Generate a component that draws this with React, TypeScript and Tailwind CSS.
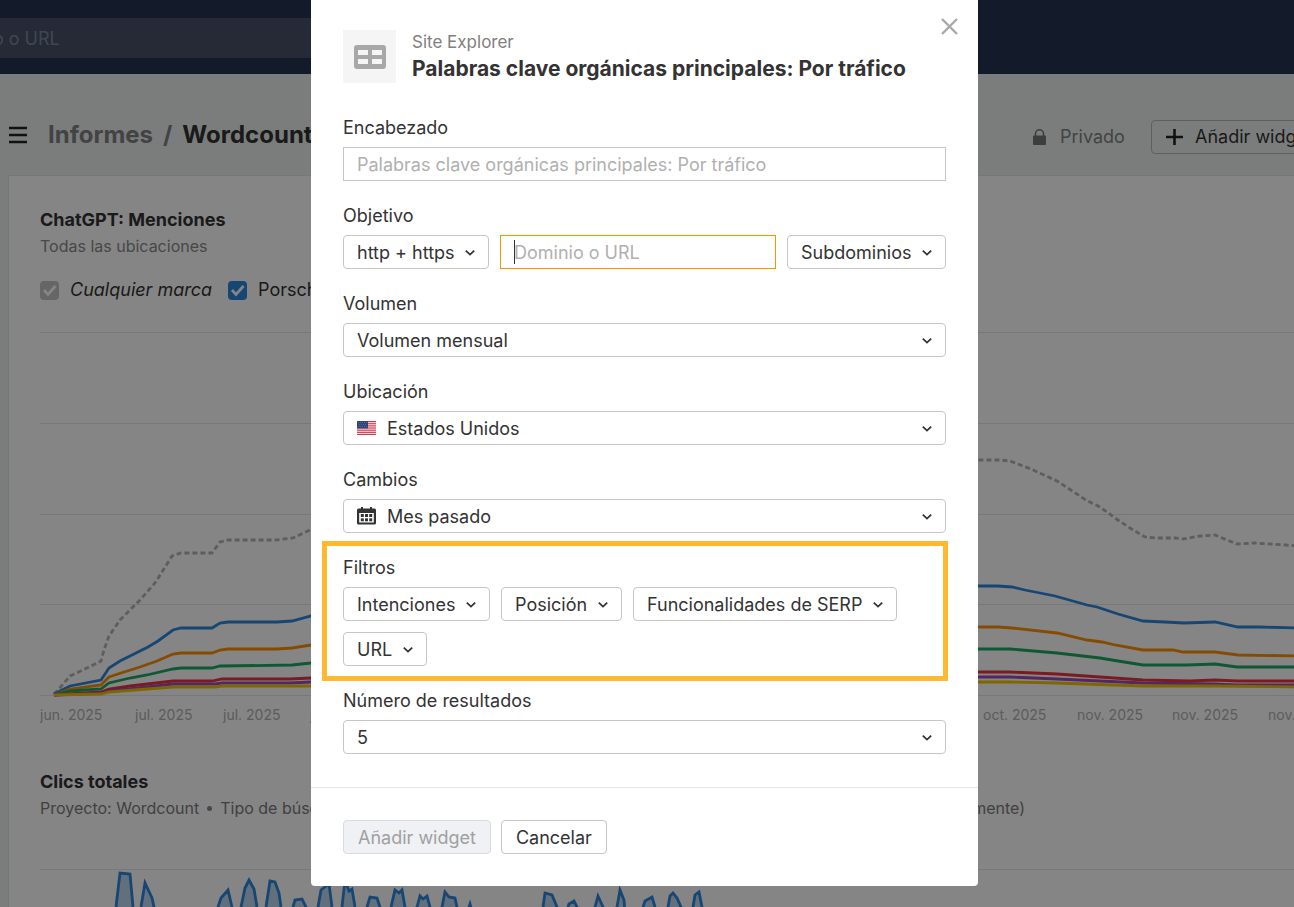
import { useId, type ReactNode } from 'react'

interface Series {
  name: string
  color: string
  dashed?: boolean
  points: string
}

const mentions: Series[] = [
  {
    name: 'any',
    color: '#b4b4b4',
    dashed: true,
    points:
      '54,694 58,690 70,676 85,669 101,661 104,650 109,636 120,620 140,600 155,583 172,556 181,553 212,553 220,542 228,540 276,540 293,538 310,530 420,500 640,470 860,462 980,460 1000,460 1010,461 1031,469 1057,481 1086,500 1100,507 1115,518 1130,528 1145,537 1155,538 1175,538 1183,539 1200,536 1215,535 1237,544 1255,543 1300,546',
  },
  {
    name: 'blue',
    color: '#2c86dd',
    points:
      '54,694 70,686 101,680 109,668 120,661 130,656 148,647 158,641 173,630 181,628 212,628 220,623 228,622 277,622 292,621 311,616 640,590 978,586 998,586 1012,587 1025,590 1055,596 1087,605 1097,607 1118,614 1143,621 1165,622 1184,623 1215,622 1238,627 1260,627 1300,628',
  },
  {
    name: 'orange',
    color: '#ff9100',
    points:
      '54,695 70,689 101,685 109,677 121,673 140,667 157,661 173,654 181,653 212,653 220,650 228,649 277,649 292,648 311,645 640,630 978,627 998,627 1012,628 1048,632 1057,633 1087,640 1102,642 1115,645 1143,650 1173,650 1183,652 1215,652 1238,655 1300,656',
  },
  {
    name: 'green',
    color: '#1fa862',
    points:
      '54,695 70,691 101,689 109,683 130,678 147,675 173,669 181,668 212,668 220,666 292,665 311,663 640,652 978,649 1010,649 1057,653 1100,658 1118,661 1143,665 1187,665 1215,664 1237,667 1300,667',
  },
  {
    name: 'red',
    color: '#ea3340',
    points:
      '54,695 101,692 109,689 130,686 173,681 212,681 222,679 290,679 311,678 640,673 978,672 1010,672 1057,674 1143,680 1190,681 1215,680 1237,681 1300,681',
  },
  {
    name: 'purple',
    color: '#a04cb8',
    points:
      '54,695 101,693 109,691 147,687 173,684 215,684 222,683 290,683 311,682 640,678 978,677 1010,677 1057,679 1143,683 1215,684 1237,685 1300,685',
  },
  {
    name: 'yellow',
    color: '#f2c300',
    points:
      '54,695 101,694 109,692 173,687 215,687 222,686 290,686 311,686 640,683 978,682 1010,682 1057,683 1143,686 1215,686 1300,687',
  },
]

const months = [
  { x: 40, label: 'jun. 2025' },
  { x: 135, label: 'jul. 2025' },
  { x: 223, label: 'jul. 2025' },
  { x: 310, label: 'jul. 2025' },
  { x: 983, label: 'oct. 2025' },
  { x: 1077, label: 'nov. 2025' },
  { x: 1172, label: 'nov. 2025' },
  { x: 1268, label: 'nov. 2025' },
]

const gridLines = [332, 423, 514, 604, 695]

const clicks =
  '40,925 112,925 116,907 120,873 130,874 133,907 137,925 141,907 145,883 152,898 154,907 160,925 212,925 218,907 221,898 228,890 232,907 236,925 241,907 245,888 249,880 254,889 257,907 261,925 266,907 270,881 275,882 279,893 281,907 286,925 293,907 295,900 302,899 306,907 312,925 318,907 321,890 329,884 332,907 337,925 342,907 345,880 349,891 352,889 355,907 360,925 367,907 370,897 377,898 380,907 386,925 391,907 395,890 399,893 402,890 405,907 411,925 417,907 420,896 423,899 427,896 430,907 436,925 442,907 445,892 449,897 455,898 457,907 463,925 470,904 476,925 538,925 543,907 545,893 552,895 557,907 562,925 569,904 574,901 577,907 582,925 595,907 598,896 603,907 608,925 617,907 620,890 624,900 626,925 640,925 643,907 645,901 652,897 655,907 661,925 668,907 670,896 673,893 677,898 681,907 686,925 693,907 695,895 699,892 702,907 708,925 1300,925'

function Chevron() {
  return (
    <svg
      className="pointer-events-none absolute right-3.5 top-1/2 -translate-y-1/2"
      width="10"
      height="8"
      viewBox="0 0 10 8"
      fill="none"
      stroke="#333"
      strokeWidth="1.8"
      aria-hidden="true"
    >
      <path d="M0.8 2.600 L5 6.600 L9.2 2.600" />
    </svg>
  )
}

interface DropdownProps {
  id?: string
  value: string
  label?: string
  icon?: ReactNode
  block?: boolean
}

function Dropdown({ id, value, label, icon, block }: DropdownProps) {
  return (
    <div className={block ? 'relative w-full' : 'relative'}>
      {icon && <span className="pointer-events-none absolute left-3.5 top-1/2 -translate-y-1/2">{icon}</span>}
      <select
        id={id}
        aria-label={label}
        className={`h-[34px] appearance-none rounded-[4px] border border-[#c6c6c6] bg-white pr-[33px] text-[18px] text-[#333] ${
          icon ? 'pl-[43px]' : 'pl-[13px]'
        } ${block ? 'w-full' : ''}`}
      >
        <option>{value}</option>
      </select>
      <Chevron />
    </div>
  )
}

function Field({ label, children }: { label: string; children: (id: string) => ReactNode }) {
  const id = useId()
  return (
    <div className="flex flex-col gap-1.5">
      <label htmlFor={id} className="text-[18px] leading-[26px]">
        {label}
      </label>
      {children(id)}
    </div>
  )
}

function FlagUs() {
  return (
    <svg className="block" width="19" height="14" viewBox="0 0 19 14" aria-hidden="true">
      <rect width="19" height="14" fill="#f8dfe2" />
      {[0, 2, 4, 6, 8, 10, 12].map((y) => (
        <rect key={y} y={y * 1.08} width="19" height="1.1" fill="#d13a4b" />
      ))}
      <rect width="11" height="7.4" fill="#2f4579" />
      <path
        d="M1 1.5h9M2 3.5h8M1 5.5h9"
        stroke="#6b7aa5"
        strokeWidth="0.8"
        strokeDasharray="0.8 1.2"
      />
    </svg>
  )
}

function CalendarIcon() {
  return (
    <svg className="block" width="19" height="18" viewBox="0 0 19 18" aria-hidden="true">
      <path
        fill="#333"
        fillRule="evenodd"
        d="M4 0h2v1.500h7V0h2v1.500h2.500a1.500 1.500 0 0 1 1.500 1.500v13a1.500 1.500 0 0 1-1.500 1.500h-16A1.500 1.500 0 0 1 0 16V3a1.500 1.500 0 0 1 1.500-1.500H4zM2.200 6v9.500h14.600V6z"
      />
      {[7, 11.3].map((y) =>
        [3.8, 8, 12.2].map((x) => <rect key={`${x}-${y}`} x={x} y={y} width="3" height="3" fill="#333" />),
      )}
    </svg>
  )
}

function Check({ color, label, italic }: { color: 'gray' | 'blue'; label: string; italic?: boolean }) {
  return (
    <label className="flex items-center gap-[11px]">
      <span className="relative size-[19px]">
        <input
          type="checkbox"
          defaultChecked
          className={`block size-[19px] appearance-none rounded-[4px] ${
            color === 'gray' ? 'bg-[#c4c4c4]' : 'bg-[#2c86dd]'
          }`}
        />
        <svg
          className="pointer-events-none absolute inset-0"
          width="19"
          height="19"
          viewBox="0 0 19 19"
          fill="none"
          stroke="#fff"
          strokeWidth="2.8"
          aria-hidden="true"
        >
          <path d="M4 9l4 4.500 7.500-8.500" />
        </svg>
      </span>
      <span className={italic ? 'italic' : ''}>{label}</span>
    </label>
  )
}

function MentionsChart() {
  return (
    <svg className="mt-[23px] block" width="1300" height="400" viewBox="40 325 1300 400" role="img" aria-label="ChatGPT: Menciones">
      {gridLines.map((y) => (
        <path key={y} d={`M40 ${y}.5H1340`} stroke="#e6e6e6" />
      ))}
      {mentions.map((s) => (
        <polyline
          key={s.name}
          points={s.points}
          fill="none"
          stroke={s.color}
          strokeWidth="2.8"
          strokeDasharray={s.dashed ? '5 3' : undefined}
        />
      ))}
      {months.map((m) => (
        <text key={m.x} x={m.x} y="720" fontSize="14" fill="#b0b0b0">
          {m.label}
        </text>
      ))}
    </svg>
  )
}

function ReportPage() {
  return (
    <div className="min-w-[1400px] text-[#333]">
      <header className="h-[74px] bg-[#253252] pt-[18px]">
        <input
          type="text"
          aria-label="Buscar"
          placeholder="Dominio o URL"
          className="-ml-20 h-10 w-[900px] bg-[#475269] px-3.5 text-[18px] placeholder:text-[#7e879b]"
        />
      </header>

      <div className="flex h-[101px] items-center pl-2 pt-6">
        <div className="flex items-center pb-1">
          <button type="button" aria-label="Menú">
            <svg className="block" width="20" height="18" viewBox="0 0 20 18" stroke="#222" strokeWidth="2.400" aria-hidden="true">
              <path d="M1 2h18M1 9h18M1 16h18" />
            </svg>
          </button>
          <nav className="ml-5 flex gap-2.5 text-[24px] font-bold">
            <a href="#informes" className="text-[#808080]">
              Informes
            </a>
            <span className="text-[#808080]">/</span>
            <span>Wordcount</span>
          </nav>
        </div>
        <div className="ml-auto flex w-[367px] items-center">
          <svg width="13" height="16" viewBox="0 0 13 16" aria-hidden="true">
            <rect y="6.500" width="13" height="9.500" rx="1" fill="#757575" />
            <path d="M2.500 7V4.800a4 4 0 0 1 8 0V7" fill="none" stroke="#757575" strokeWidth="1.600" />
          </svg>
          <span className="ml-3.5 text-[18px] text-[#808080]">Privado</span>
          <button
            type="button"
            className="ml-auto flex h-[34px] w-[249px] items-center gap-3 rounded-[4px] border border-[#b4b8b6] px-3.5 text-[18px]"
          >
            <svg width="17" height="16" viewBox="0 0 17 16" stroke="#222" strokeWidth="2.600" aria-hidden="true">
              <path d="M8.500 0v16M0 8h17" />
            </svg>
            Añadir widget
          </button>
        </div>
      </div>

      <main className="ml-2 border border-[#e0e4e2] bg-white pb-20 pl-[31px] pt-8">
        <section>
          <h2 className="text-[18px] font-bold leading-6">ChatGPT: Menciones</h2>
          <p className="mt-0.5 text-[16px] leading-6 text-[#8a8a8a]">Todas las ubicaciones</p>
          <div className="mt-5 flex items-center gap-4 text-[18px] leading-6">
            <Check color="gray" label="Cualquier marca" italic />
            <Check color="blue" label="Porsche" />
          </div>
          <MentionsChart />
        </section>

        <section className="mt-[45px]">
          <h2 className="text-[18px] font-bold leading-6">Clics totales</h2>
          <div className="mt-0.5 flex w-[985px] justify-between text-[16px] leading-6 text-[#7d7d7d]">
            <p className="flex items-center gap-2">
              Proyecto: Wordcount
              <span className="size-[5px] rounded-full bg-[#8a8a8a]" />
              Tipo de búsqueda: Web
            </p>
            <p>(agrupado mensualmente)</p>
          </div>
          <svg className="mt-10 block" width="1300" height="66" viewBox="40 860 1300 66" role="img" aria-label="Clics totales">
            <path d="M40 869.500H1340" stroke="#e6e6e6" />
            <polygon points={clicks} fill="#bcd5ef" />
            <polyline points={clicks} fill="none" stroke="#2c86dd" strokeWidth="2.800" />
          </svg>
        </section>
      </main>
    </div>
  )
}

function WidgetDialog() {
  return (
    <form role="dialog" aria-labelledby="dialog-title" className="relative w-[667px] rounded-b-[4px] bg-white text-[#333]">
      <button type="button" aria-label="Cerrar" className="absolute right-3.5 top-3 p-1.5">
        <svg className="block" width="17" height="17" viewBox="0 0 17 17" stroke="#a8a8a8" strokeWidth="2.400" aria-hidden="true">
          <path d="M1 1l15 15M16 1L1 16" />
        </svg>
      </button>

      <div className="flex flex-col gap-[22px] px-8 pb-[33px] pt-[30px]">
        <div className="mb-2.5 flex gap-4">
          <div className="flex size-[53px] items-center justify-center bg-[#f5f5f5]">
            <svg width="32" height="24" viewBox="0 0 32 24" aria-hidden="true">
              <rect width="32" height="24" rx="3" fill="#a8a8a8" />
              <path d="M4 5h10v5H4zM18 5h10v5H18zM4 14h10v5H4zM18 14h10v5H18z" fill="#f5f5f5" />
            </svg>
          </div>
          <div>
            <p className="text-[17px] leading-6 text-[#808080]">Site Explorer</p>
            <h1 id="dialog-title" className="text-[21px] font-bold leading-[29px]">
              Palabras clave orgánicas principales: Por tráfico
            </h1>
          </div>
        </div>

        <Field label="Encabezado">
          {(id) => (
            <input
              id={id}
              type="text"
              placeholder="Palabras clave orgánicas principales: Por tráfico"
              className="h-[34px] border border-[#c6c6c6] px-[13px] text-[18px] placeholder:text-[#b0b0b0]"
            />
          )}
        </Field>

        <Field label="Objetivo">
          {(id) => (
            <div className="flex gap-[11px]">
              <Dropdown value="http + https" label="Protocolo" />
              <div className="relative min-w-0 flex-1">
                <input
                  id={id}
                  type="text"
                  placeholder="Dominio o URL"
                  className="h-[34px] w-full border border-[#ff9100] px-[13px] text-[18px] outline-none placeholder:text-[#b0b0b0]"
                />
                {/* caret */}
                <span className="pointer-events-none absolute left-3.5 top-[5px] h-6 w-px bg-[#333]" />
              </div>
              <Dropdown value="Subdominios" label="Ámbito" />
            </div>
          )}
        </Field>

        <Field label="Volumen">{(id) => <Dropdown id={id} value="Volumen mensual" block />}</Field>
        <Field label="Ubicación">{(id) => <Dropdown id={id} value="Estados Unidos" icon={<FlagUs />} block />}</Field>
        <Field label="Cambios">{(id) => <Dropdown id={id} value="Mes pasado" icon={<CalendarIcon />} block />}</Field>

        <div className="relative">
          {/* highlight around the filters */}
          <div className="pointer-events-none absolute -bottom-[15px] -left-[21px] -right-0.5 -top-3.5 border-5 border-[#ffb931]" />
          <Field label="Filtros">
            {(id) => (
              <div className="flex flex-wrap gap-[11px]">
                <Dropdown id={id} value="Intenciones" />
                <Dropdown value="Posición" label="Posición" />
                <Dropdown value="Funcionalidades de SERP" label="Funcionalidades de SERP" />
                <Dropdown value="URL" label="URL" />
              </div>
            )}
          </Field>
        </div>

        <Field label="Número de resultados">{(id) => <Dropdown id={id} value="5" block />}</Field>
      </div>

      <div className="flex gap-2.5 border-t border-[#e6e6e6] px-8 py-8 text-[18px]">
        <button type="submit" disabled className="h-[34px] rounded-[4px] border border-[#d9dbde] bg-[#eff1f4] px-3.5 text-[#a0a0a0]">
          Añadir widget
        </button>
        <button type="button" className="h-[34px] rounded-[4px] border border-[#c6c6c6] bg-white px-3.5">
          Cancelar
        </button>
      </div>
    </form>
  )
}

export default function App() {
  return (
    <div className="h-screen overflow-hidden bg-[#ecf0ee] font-['Inter','Liberation_Sans',sans-serif]">
      <ReportPage />
      <div className="fixed inset-0 flex items-start justify-center overflow-hidden bg-black/48 pr-[5px]">
        <WidgetDialog />
      </div>
    </div>
  )
}
